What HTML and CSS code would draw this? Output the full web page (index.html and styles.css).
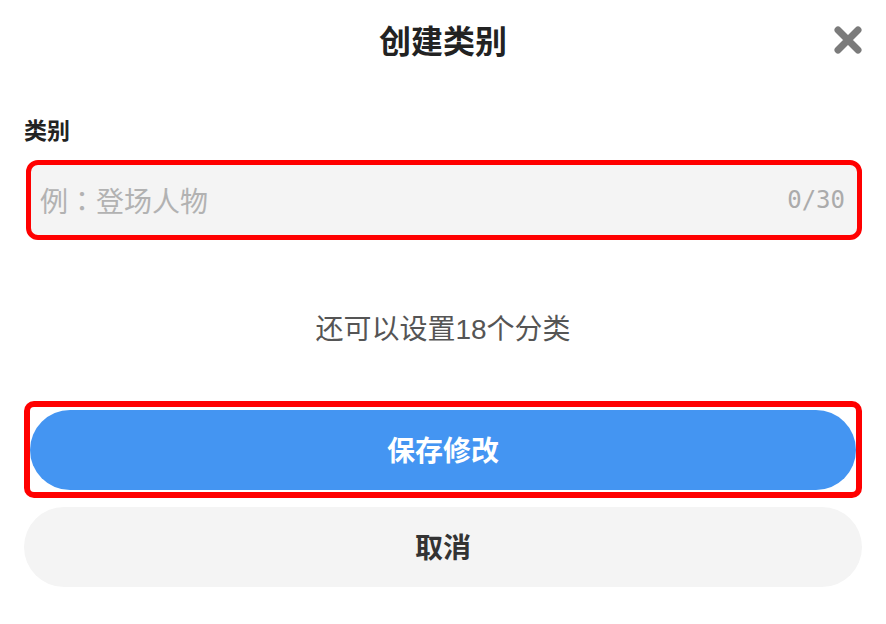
FILE: index.html
```html
<!DOCTYPE html>
<html lang="zh-CN">

<head>
  <meta charset="UTF-8">
  <meta name="viewport" content="width=device-width, initial-scale=1.0">
  <title>创建类别</title>
  <link rel="stylesheet" href="styles.css">
</head>

<body>
  <div class="sheet">
    <header class="head">
      <h1>创建类别</h1>
      <button class="close" aria-label="关闭">
        <svg width="28" height="28" viewBox="0 0 28 28">
          <path d="M4 4 L24 24 M24 4 L4 24" stroke="#7b7b7b" stroke-width="7" stroke-linecap="round" fill="none" />
        </svg>
      </button>
    </header>

    <label class="field-label" for="categoryName">类别</label>
    <div class="mark input-mark">
      <div class="input-box">
        <input type="text" id="categoryName" lang="zh-Hant" placeholder="例：登场人物" maxlength="30" />
        <span class="count">0/30</span>
      </div>
    </div>

    <p class="hint">还可以设置18个分类</p>

    <div class="mark btn-mark">
      <button class="btn primary">保存修改</button>
    </div>
    <button class="btn secondary">取消</button>
  </div>
</body>

</html>
```

FILE: styles.css
```css
* {
  margin: 0;
  padding: 0;
  box-sizing: border-box;
}

body {
  font-family: "Liberation Sans", "Noto Sans CJK SC", sans-serif;
  background: #fff;
  color: #222;
}

.sheet {
  padding: 0 24px;
}

.head {
  position: relative;
  height: 80px;
  display: flex;
  align-items: center;
  justify-content: center;
}

.head h1 {
  font-size: 32px;
  font-weight: 700;
  color: #222;
  margin-top: -3px;
}

.close {
  position: absolute;
  right: 0;
  top: 26px;
  width: 28px;
  height: 28px;
  border: none;
  background: none;
  display: flex;
}

.field-label {
  display: block;
  margin-top: 36px;
  font-size: 23px;
  line-height: 30px;
  font-weight: 700;
  color: #222;
}

.mark {
  border: 5px solid #ff0000;
  border-radius: 12px;
}

.input-mark {
  margin: 14px 0 0 2px;
  height: 80px;
  padding: 1px;
  background: #f4f4f4;
}

.input-box {
  height: 100%;
  background: #f4f4f4;
  border-radius: 7px;
  display: flex;
  align-items: center;
  padding: 0 11px 0 8px;
}

.input-box input {
  flex: 1;
  border: none;
  outline: none;
  background: transparent;
  font-family: "Noto Sans CJK TC", sans-serif;
  font-size: 28px;
  color: #333;
}

.input-box input::placeholder {
  color: #b2b2b2;
}

.count {
  font-family: "DejaVu Sans Mono", monospace;
  font-size: 24px;
  color: #ababab;
}

.hint {
  margin-top: 71px;
  text-align: center;
  font-size: 28px;
  line-height: 38px;
  color: #555;
}

.btn-mark {
  margin-top: 52px;
  border-width: 6px;
  border-radius: 10px;
  padding: 3px 0 2px;
}

.btn {
  display: block;
  width: 100%;
  height: 80px;
  border: none;
  border-radius: 40px;
  font-family: inherit;
  font-size: 28px;
  font-weight: 700;
  padding-bottom: 3px;
}

.primary {
  background: #4495f2;
  color: #fff;
}

.secondary {
  margin-top: 9px;
  background: #f4f4f4;
  color: #333;
}
```
